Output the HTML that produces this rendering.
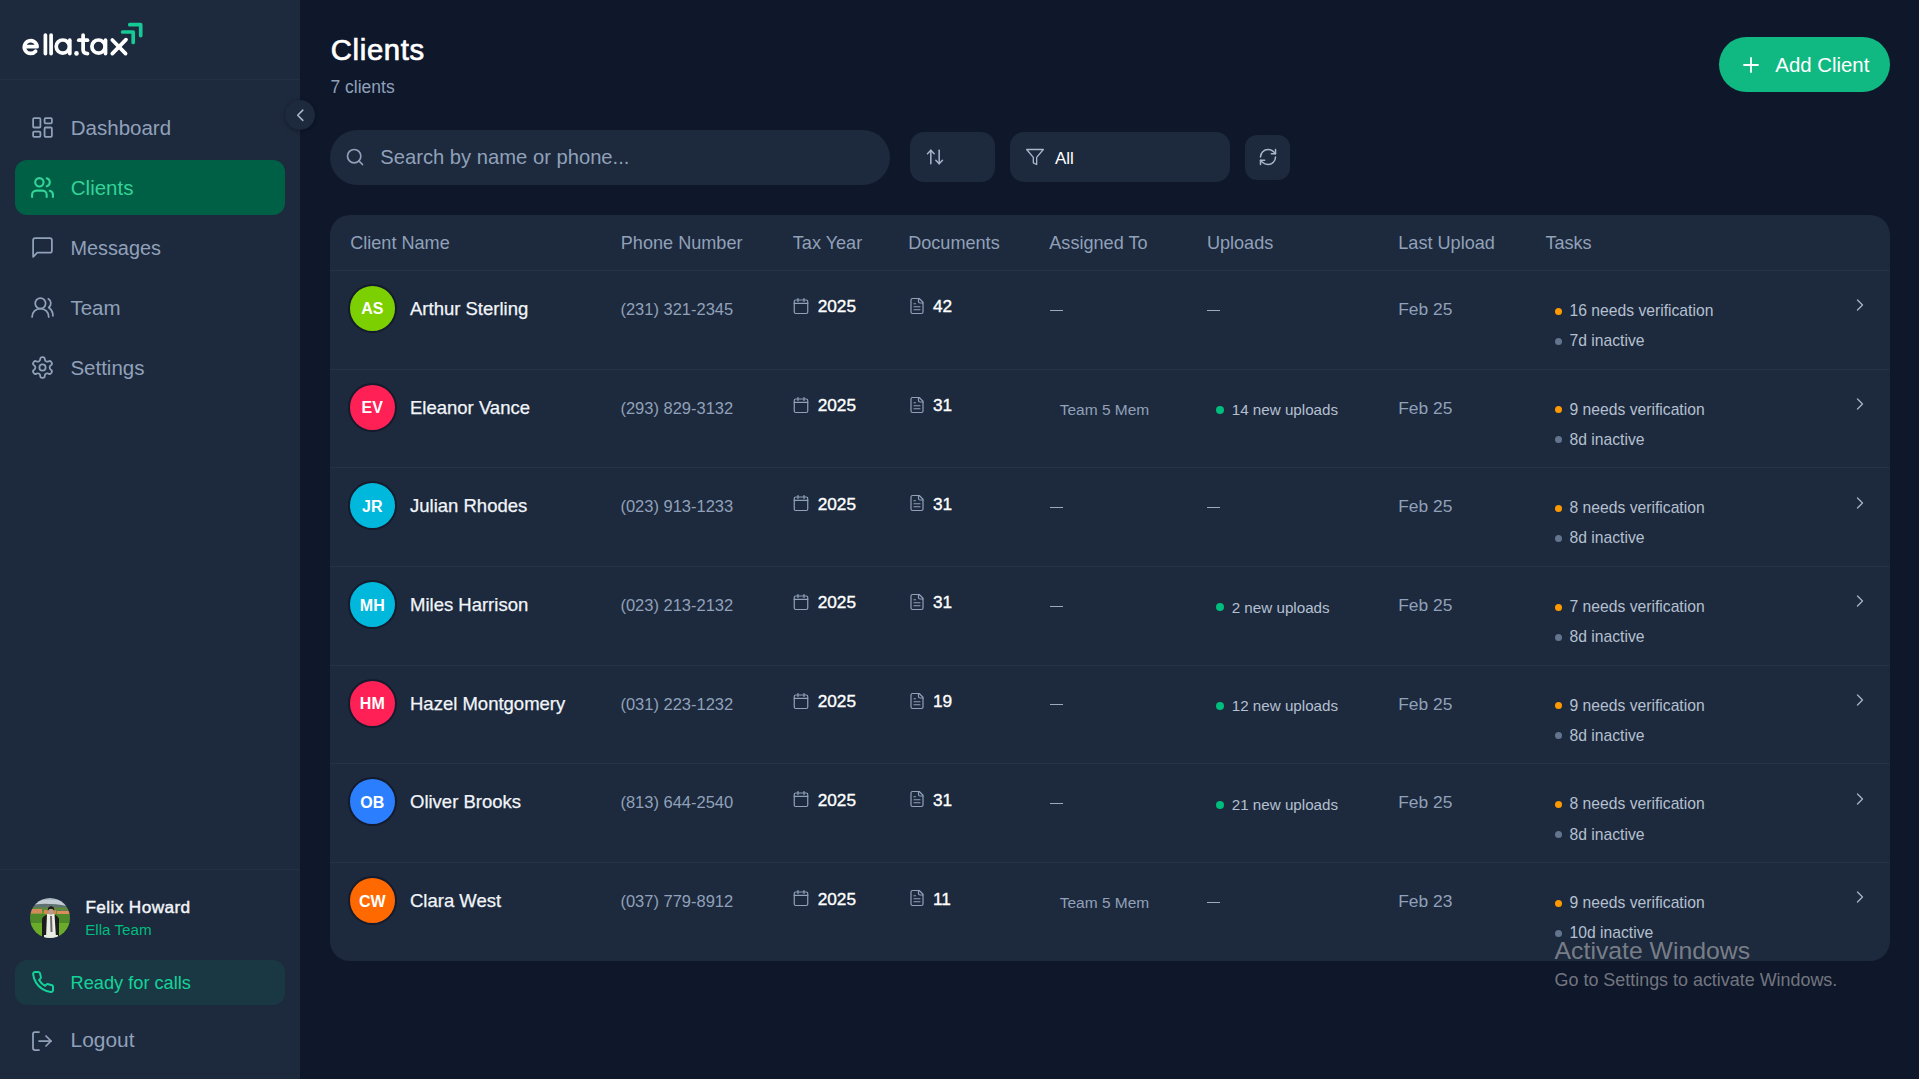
<!DOCTYPE html>
<html><head><meta charset="utf-8"><title>Clients</title>
<style>
html,body{margin:0;padding:0;}
body{width:1919px;height:1079px;overflow:hidden;background:#0f172b;position:relative;font-family:"Liberation Sans",sans-serif;}
.t{position:absolute;white-space:nowrap;line-height:1;}
.b{position:absolute;box-sizing:border-box;}
.i{position:absolute;overflow:visible;}
</style></head><body>
<div class="b" style="left:0px;top:0px;width:300px;height:1079px;background:#1d293d;border-radius:0px;"></div>
<div class="b" style="left:0px;top:79px;width:300px;height:1px;background:#243044;border-radius:0px;"></div>
<div class="b" style="left:0px;top:869px;width:300px;height:1px;background:#243044;border-radius:0px;"></div>
<svg class="i" style="left:0;top:0;width:160px;height:80px" viewBox="0 0 160 80" fill="none" stroke-linecap="round" stroke-linejoin="round">
<g stroke="#ffffff" stroke-width="3.7">
<path d="M24.6 46.7 H37.1 A6.4 6.4 0 1 0 35.6 51.2"/>
<path d="M45.4 35 V53.6"/><path d="M51.1 35 V53.6"/>
<circle cx="62.8" cy="46.6" r="6.6"/><path d="M69.8 40.2 V53.6"/>
<path d="M83.1 35 V50 Q83.1 53.6 87.5 53.6"/><path d="M78.8 40.2 H87.5"/>
<circle cx="98.5" cy="46.6" r="6.6"/><path d="M105.5 40.2 V53.6"/>
<path d="M112.3 40 L125.6 53.6"/><path d="M112.3 53.6 L126 39.6"/>
</g>
<circle cx="76.5" cy="53.4" r="2.3" fill="#fff"/>
<g stroke="#17c994" stroke-width="3.7" stroke-linecap="round">
<path d="M122.6 32 H133.2 V42.5"/><path d="M129.8 24.7 H140.7 V35.6"/>
</g>
</svg>
<div class="b" style="left:15px;top:160px;width:270px;height:55px;background:#006045;border-radius:12px;"></div>
<svg class="i" style="left:30.00px;top:115.00px;width:25px;height:25px" viewBox="0 0 24 24" fill="none" stroke="#90a1b9" stroke-width="1.7" stroke-linecap="round" stroke-linejoin="round"><rect width="7" height="9" x="3" y="3" rx="1"/><rect width="7" height="5" x="14" y="3" rx="1"/><rect width="7" height="9" x="14" y="12" rx="1"/><rect width="7" height="5" x="3" y="16" rx="1"/></svg>
<div class="t" style="left:70.80px;top:117.64px;font-size:20.50px;color:#90a1b9;">Dashboard</div>
<svg class="i" style="left:30.00px;top:174.80px;width:25px;height:25px" viewBox="0 0 24 24" fill="none" stroke="#34d399" stroke-width="2" stroke-linecap="round" stroke-linejoin="round"><path d="M16 21v-2a4 4 0 0 0-4-4H6a4 4 0 0 0-4 4v2"/><path d="M16 3.128a4 4 0 0 1 0 7.744"/><path d="M22 21v-2a4 4 0 0 0-3-3.87"/><circle cx="9" cy="7" r="4"/></svg>
<div class="t" style="left:70.80px;top:177.64px;font-size:20.50px;color:#34d399;">Clients</div>
<svg class="i" style="left:29.90px;top:234.90px;width:25px;height:25px" viewBox="0 0 24 24" fill="none" stroke="#90a1b9" stroke-width="1.7" stroke-linecap="round" stroke-linejoin="round"><path d="M21 15a2 2 0 0 1-2 2H7l-4 4V5a2 2 0 0 1 2-2h14a2 2 0 0 1 2 2z"/></svg>
<div class="t" style="left:70.40px;top:238.78px;font-size:19.87px;color:#90a1b9;">Messages</div>
<svg class="i" style="left:29.90px;top:294.90px;width:25px;height:25px" viewBox="0 0 24 24" fill="none" stroke="#90a1b9" stroke-width="1.7" stroke-linecap="round" stroke-linejoin="round"><path d="M18 21a8 8 0 0 0-16 0"/><circle cx="10" cy="8" r="5"/><path d="M22 20c0-3.37-2-6.5-4-8a5 5 0 0 0-.45-8.3"/></svg>
<div class="t" style="left:70.40px;top:297.64px;font-size:20.50px;color:#90a1b9;">Team</div>
<svg class="i" style="left:29.90px;top:355.10px;width:25px;height:25px" viewBox="0 0 24 24" fill="none" stroke="#90a1b9" stroke-width="1.7" stroke-linecap="round" stroke-linejoin="round"><path d="M12.22 2h-.44a2 2 0 0 0-2 2v.18a2 2 0 0 1-1 1.73l-.43.25a2 2 0 0 1-2 0l-.15-.08a2 2 0 0 0-2.73.73l-.22.38a2 2 0 0 0 .73 2.730l.15.1a2 2 0 0 1 1 1.72v.51a2 2 0 0 1-1 1.74l-.15.09a2 2 0 0 0-.73 2.73l.22.38a2 2 0 0 0 2.73.73l.15-.08a2 2 0 0 1 2 0l.43.25a2 2 0 0 1 1 1.73V20a2 2 0 0 0 2 2h.44a2 2 0 0 0 2-2v-.18a2 2 0 0 1 1-1.73l.43-.25a2 2 0 0 1 2 0l.15.08a2 2 0 0 0 2.73-.73l.22-.39a2 2 0 0 0-.73-2.73l-.15-.08a2 2 0 0 1-1-1.74v-.5a2 2 0 0 1 1-1.74l.15-.09a2 2 0 0 0 .73-2.73l-.22-.38a2 2 0 0 0-2.73-.73l-.15.08a2 2 0 0 1-2 0l-.43-.25a2 2 0 0 1-1-1.73V4a2 2 0 0 0-2-2z"/><circle cx="12" cy="12" r="3"/></svg>
<div class="t" style="left:70.40px;top:357.94px;font-size:20.50px;color:#90a1b9;">Settings</div>
<div class="b" style="left:285px;top:100px;width:30px;height:30px;border-radius:50%;background:#1d293d;box-shadow:0 1px 4px rgba(0,0,0,0.35)"></div>
<svg class="i" style="left:289.75px;top:104.75px;width:20.5px;height:20.5px" viewBox="0 0 24 24" fill="none" stroke="#a9b7cc" stroke-width="1.8" stroke-linecap="round" stroke-linejoin="round"><path d="m15 18-6-6 6-6"/></svg>
<svg class="i" style="left:30px;top:898px;width:40px;height:40px" viewBox="0 0 40 40">
<defs><clipPath id="cp"><circle cx="20" cy="20" r="20"/></clipPath><filter id="bl"><feGaussianBlur stdDeviation="0.5"/></filter></defs>
<g clip-path="url(#cp)"><g filter="url(#bl)">
<rect x="-2" y="-2" width="44" height="44" fill="#5f9a2c"/>
<rect x="-2" y="-2" width="44" height="10" fill="#a9b9c3"/>
<rect x="-2" y="2" width="44" height="5" fill="#c3ccd2"/>
<path d="M-2 8 Q10 5 20 6 Q32 6 42 10 L42 13 L-2 13 Z" fill="#5e716f"/>
<rect x="-2" y="9.5" width="44" height="3" fill="#5f8a38"/>
<rect x="-2" y="11" width="14" height="4.5" fill="#d4895a"/>
<rect x="14" y="12" width="12" height="4" fill="#cf8a55"/>
<rect x="27" y="13" width="15" height="3.5" fill="#d98d5a"/>
<rect x="-2" y="16" width="44" height="10" fill="#4f8a2a"/>
<rect x="-2" y="25" width="44" height="17" fill="#6aac2a"/>
<path d="M12 40 L12 21 Q13 17.5 18 16.5 L24 16.5 Q28 17.5 29 21 L29 40 Z" fill="#1c1e1a"/>
<path d="M17 16 L24.5 16 L26 40 L16 40 Z" fill="#eceee6"/>
<path d="M20 18 L22 18 L22.5 34 L20.5 34 Z" fill="#6a6a6a"/>
<ellipse cx="21" cy="13.5" rx="2.8" ry="3.2" fill="#b89a88"/>
<path d="M17.8 13 Q17.5 8.5 21 8.2 Q24.5 8.5 24.3 13 Q23 10.5 21 10.8 Q19 10.5 17.8 13Z" fill="#1a1614"/>
<rect x="14" y="37" width="14" height="4" fill="#e8efe0"/>
</g></g></svg>
<div class="t" style="left:85.40px;top:899.44px;font-size:17.20px;color:#f1f5f9;-webkit-text-stroke:0.45px #f1f5f9;letter-spacing:0.4px;">Felix Howard</div>
<div class="t" style="left:85.20px;top:922.23px;font-size:15.20px;color:#00bc7d;">Ella Team</div>
<div class="b" style="left:15px;top:960px;width:270px;height:45px;background:#1a3843;border-radius:12px;"></div>
<svg class="i" style="left:30.60px;top:970.40px;width:24px;height:24px" viewBox="0 0 24 24" fill="none" stroke="#14d39a" stroke-width="2" stroke-linecap="round" stroke-linejoin="round"><path d="M22 16.920v3a2 2 0 0 1-2.18 2 19.79 19.79 0 0 1-8.63-3.07 19.5 19.5 0 0 1-6-6 19.79 19.79 0 0 1-3.07-8.67A2 2 0 0 1 4.11 2h3a2 2 0 0 1 2 1.72 12.84 12.84 0 0 0 .7 2.81 2 2 0 0 1-.45 2.11L8.09 9.91a16 16 0 0 0 6 6l1.27-1.27a2 2 0 0 1 2.11-.45 12.84 12.84 0 0 0 2.81.7A2 2 0 0 1 22 16.92z"/></svg>
<div class="t" style="left:70.60px;top:974.19px;font-size:18.20px;color:#14d39a;">Ready for calls</div>
<svg class="i" style="left:30.40px;top:1028.70px;width:24px;height:24px" viewBox="0 0 24 24" fill="none" stroke="#90a1b9" stroke-width="1.75" stroke-linecap="round" stroke-linejoin="round"><path d="M9 21H5a2 2 0 0 1-2-2V5a2 2 0 0 1 2-2h4"/><polyline points="16 17 21 12 16 7"/><line x1="21" x2="9" y1="12" y2="12"/></svg>
<div class="t" style="left:70.60px;top:1029.80px;font-size:20.90px;color:#90a1b9;">Logout</div>
<div class="t" style="left:330.80px;top:34.79px;font-size:29.30px;color:#ffffff;-webkit-text-stroke:0.7px #fff;letter-spacing:0.65px;">Clients</div>
<div class="t" style="left:330.50px;top:79.38px;font-size:17.50px;color:#90a1b9;">7 clients</div>
<div class="b" style="left:1719px;top:37px;width:171px;height:55px;background:#10b981;border-radius:27.5px;"></div>
<svg class="i" style="left:1739.20px;top:52.60px;width:24px;height:24px" viewBox="0 0 24 24" fill="none" stroke="#ffffff" stroke-width="1.8" stroke-linecap="round" stroke-linejoin="round"><path d="M5 12h14"/><path d="M12 5v14"/></svg>
<div class="t" style="left:1775.30px;top:55.03px;font-size:20.40px;color:#ffffff;">Add Client</div>
<div class="b" style="left:330px;top:130px;width:560px;height:55px;background:#1d293d;border-radius:27.5px;"></div>
<svg class="i" style="left:345.00px;top:146.80px;width:20px;height:20px" viewBox="0 0 24 24" fill="none" stroke="#90a1b9" stroke-width="2" stroke-linecap="round" stroke-linejoin="round"><circle cx="11" cy="11" r="8"/><path d="m21 21-4.3-4.3"/></svg>
<div class="t" style="left:380.30px;top:146.60px;font-size:20.20px;color:#90a1b9;">Search by name or phone...</div>
<div class="b" style="left:910px;top:132px;width:85px;height:50px;background:#1d293d;border-radius:14px;"></div>
<svg class="i" style="left:924.80px;top:146.90px;width:20px;height:20px" viewBox="0 0 24 24" fill="none" stroke="#a9b7cc" stroke-width="1.8" stroke-linecap="round" stroke-linejoin="round"><path d="m21 16-4 4-4-4"/><path d="M17 20V4"/><path d="m3 8 4-4 4 4"/><path d="M7 4v16"/></svg>
<div class="b" style="left:1010px;top:132px;width:220px;height:50px;background:#1d293d;border-radius:14px;"></div>
<svg class="i" style="left:1025.00px;top:146.50px;width:20px;height:20px" viewBox="0 0 24 24" fill="none" stroke="#a9b7cc" stroke-width="1.6" stroke-linecap="round" stroke-linejoin="round"><polygon points="22 3 2 3 10 12.46 10 19 14 21 14 12.46 22 3"/></svg>
<div class="t" style="left:1055.00px;top:149.81px;font-size:17.00px;color:#ffffff;">All</div>
<div class="b" style="left:1245px;top:135px;width:45px;height:45px;background:#1d293d;border-radius:12px;"></div>
<svg class="i" style="left:1257.90px;top:147.00px;width:20px;height:20px" viewBox="0 0 24 24" fill="none" stroke="#a9b7cc" stroke-width="1.8" stroke-linecap="round" stroke-linejoin="round"><path d="M3 12a9 9 0 0 1 9-9 9.75 9.75 0 0 1 6.74 2.74L21 8"/><path d="M21 3v5h-5"/><path d="M21 12a9 9 0 0 1-9 9 9.75 9.75 0 0 1-6.74-2.74L3 16"/><path d="M8 16H3v5"/></svg>
<div class="b" style="left:330px;top:215px;width:1560px;height:746px;background:#1d293d;border-radius:20px;"></div>
<div class="t" style="left:350.20px;top:233.87px;font-size:18.10px;color:#90a1b9;">Client Name</div>
<div class="t" style="left:620.80px;top:233.87px;font-size:18.10px;color:#90a1b9;">Phone Number</div>
<div class="t" style="left:792.80px;top:233.87px;font-size:18.10px;color:#90a1b9;">Tax Year</div>
<div class="t" style="left:908.20px;top:233.87px;font-size:18.10px;color:#90a1b9;">Documents</div>
<div class="t" style="left:1049.30px;top:233.87px;font-size:18.10px;color:#90a1b9;">Assigned To</div>
<div class="t" style="left:1206.90px;top:233.87px;font-size:18.10px;color:#90a1b9;">Uploads</div>
<div class="t" style="left:1398.30px;top:233.87px;font-size:18.10px;color:#90a1b9;">Last Upload</div>
<div class="t" style="left:1545.40px;top:233.87px;font-size:18.10px;color:#90a1b9;">Tasks</div>
<div class="b" style="left:330px;top:270px;width:1560px;height:1px;background:#273245;border-radius:0px;"></div>
<div class="b" style="left:348px;top:284.00px;width:49px;height:49px;border-radius:50%;background:#7ccf00;border:2px solid #131b2d"></div>
<div class="t" style="left:361.18px;top:301.45px;font-size:16.00px;color:#ffffff;font-weight:700;">AS</div>
<div class="t" style="left:410.00px;top:299.94px;font-size:18.50px;color:#f1f5f9;-webkit-text-stroke:0.25px #f1f5f9;">Arthur Sterling</div>
<div class="t" style="left:620.40px;top:301.03px;font-size:16.50px;color:#90a1b9;">(231) 321-2345</div>
<svg class="i" style="left:791.60px;top:297.00px;width:18px;height:18px" viewBox="0 0 24 24" fill="none" stroke="#90a1b9" stroke-width="1.6" stroke-linecap="round" stroke-linejoin="round"><rect width="18" height="18" x="3" y="4" rx="2" ry="2"/><line x1="16" x2="16" y1="2" y2="6"/><line x1="8" x2="8" y1="2" y2="6"/><line x1="3" x2="21" y1="8.6" y2="8.6"/></svg>
<div class="t" style="left:817.70px;top:298.39px;font-size:17.25px;color:#ffffff;-webkit-text-stroke:0.35px #fff;">2025</div>
<svg class="i" style="left:907.60px;top:297.00px;width:18px;height:18px" viewBox="0 0 24 24" fill="none" stroke="#90a1b9" stroke-width="1.6" stroke-linecap="round" stroke-linejoin="round"><path d="M15 2H6a2 2 0 0 0-2 2v16a2 2 0 0 0 2 2h12a2 2 0 0 0 2-2V7Z"/><path d="M14 2v4a2 2 0 0 0 2 2h4"/><path d="M10 9H8"/><path d="M16 13H8"/><path d="M16 17H8"/></svg>
<div class="t" style="left:933.00px;top:298.39px;font-size:17.25px;color:#ffffff;-webkit-text-stroke:0.35px #fff;">42</div>
<div class="b" style="left:1050px;top:309.75px;width:13px;height:1.5px;background:#9aaac0;border-radius:0px;"></div>
<div class="b" style="left:1207px;top:309.75px;width:13px;height:1.5px;background:#9aaac0;border-radius:0px;"></div>
<div class="t" style="left:1398.20px;top:300.97px;font-size:17.40px;color:#90a1b9;">Feb 25</div>
<div class="b" style="left:1555px;top:307.50px;width:7px;height:7px;border-radius:50%;background:#fe9a00"></div>
<div class="t" style="left:1569.50px;top:303.01px;font-size:15.70px;color:#b4c0d0;">16 needs verification</div>
<div class="b" style="left:1555px;top:337.50px;width:7px;height:7px;border-radius:50%;background:#62748e"></div>
<div class="t" style="left:1569.50px;top:333.11px;font-size:15.70px;color:#b4c0d0;">7d inactive</div>
<svg class="i" style="left:1849.80px;top:295.20px;width:20px;height:20px" viewBox="0 0 24 24" fill="none" stroke="#a3b3c9" stroke-width="1.6" stroke-linecap="round" stroke-linejoin="round"><path d="m9 18 6-6-6-6"/></svg>
<div class="b" style="left:330px;top:368.69px;width:1560px;height:1px;background:#273245;border-radius:0px;"></div>
<div class="b" style="left:348px;top:382.69px;width:49px;height:49px;border-radius:50%;background:#ff2056;border:2px solid #131b2d"></div>
<div class="t" style="left:361.62px;top:400.14px;font-size:16.00px;color:#ffffff;font-weight:700;">EV</div>
<div class="t" style="left:410.00px;top:398.63px;font-size:18.50px;color:#f1f5f9;-webkit-text-stroke:0.25px #f1f5f9;">Eleanor Vance</div>
<div class="t" style="left:620.40px;top:399.72px;font-size:16.50px;color:#90a1b9;">(293) 829-3132</div>
<svg class="i" style="left:791.60px;top:395.69px;width:18px;height:18px" viewBox="0 0 24 24" fill="none" stroke="#90a1b9" stroke-width="1.6" stroke-linecap="round" stroke-linejoin="round"><rect width="18" height="18" x="3" y="4" rx="2" ry="2"/><line x1="16" x2="16" y1="2" y2="6"/><line x1="8" x2="8" y1="2" y2="6"/><line x1="3" x2="21" y1="8.6" y2="8.6"/></svg>
<div class="t" style="left:817.70px;top:397.08px;font-size:17.25px;color:#ffffff;-webkit-text-stroke:0.35px #fff;">2025</div>
<svg class="i" style="left:907.60px;top:395.69px;width:18px;height:18px" viewBox="0 0 24 24" fill="none" stroke="#90a1b9" stroke-width="1.6" stroke-linecap="round" stroke-linejoin="round"><path d="M15 2H6a2 2 0 0 0-2 2v16a2 2 0 0 0 2 2h12a2 2 0 0 0 2-2V7Z"/><path d="M14 2v4a2 2 0 0 0 2 2h4"/><path d="M10 9H8"/><path d="M16 13H8"/><path d="M16 17H8"/></svg>
<div class="t" style="left:933.00px;top:397.08px;font-size:17.25px;color:#ffffff;-webkit-text-stroke:0.35px #fff;">31</div>
<div class="t" style="left:1059.70px;top:401.57px;font-size:15.50px;color:#90a1b9;">Team 5 Mem</div>
<div class="b" style="left:1216px;top:406.09px;width:8px;height:8px;border-radius:50%;background:#00bc7d"></div>
<div class="t" style="left:1231.70px;top:402.22px;font-size:15.20px;color:#b4c0d0;">14 new uploads</div>
<div class="t" style="left:1398.20px;top:399.66px;font-size:17.40px;color:#90a1b9;">Feb 25</div>
<div class="b" style="left:1555px;top:406.19px;width:7px;height:7px;border-radius:50%;background:#fe9a00"></div>
<div class="t" style="left:1569.50px;top:401.70px;font-size:15.70px;color:#b4c0d0;">9 needs verification</div>
<div class="b" style="left:1555px;top:436.19px;width:7px;height:7px;border-radius:50%;background:#62748e"></div>
<div class="t" style="left:1569.50px;top:431.80px;font-size:15.70px;color:#b4c0d0;">8d inactive</div>
<svg class="i" style="left:1849.80px;top:393.89px;width:20px;height:20px" viewBox="0 0 24 24" fill="none" stroke="#a3b3c9" stroke-width="1.6" stroke-linecap="round" stroke-linejoin="round"><path d="m9 18 6-6-6-6"/></svg>
<div class="b" style="left:330px;top:467.38px;width:1560px;height:1px;background:#273245;border-radius:0px;"></div>
<div class="b" style="left:348px;top:481.38px;width:49px;height:49px;border-radius:50%;background:#00b8db;border:2px solid #131b2d"></div>
<div class="t" style="left:362.06px;top:498.83px;font-size:16.00px;color:#ffffff;font-weight:700;">JR</div>
<div class="t" style="left:410.00px;top:497.32px;font-size:18.50px;color:#f1f5f9;-webkit-text-stroke:0.25px #f1f5f9;">Julian Rhodes</div>
<div class="t" style="left:620.40px;top:498.41px;font-size:16.50px;color:#90a1b9;">(023) 913-1233</div>
<svg class="i" style="left:791.60px;top:494.38px;width:18px;height:18px" viewBox="0 0 24 24" fill="none" stroke="#90a1b9" stroke-width="1.6" stroke-linecap="round" stroke-linejoin="round"><rect width="18" height="18" x="3" y="4" rx="2" ry="2"/><line x1="16" x2="16" y1="2" y2="6"/><line x1="8" x2="8" y1="2" y2="6"/><line x1="3" x2="21" y1="8.6" y2="8.6"/></svg>
<div class="t" style="left:817.70px;top:495.77px;font-size:17.25px;color:#ffffff;-webkit-text-stroke:0.35px #fff;">2025</div>
<svg class="i" style="left:907.60px;top:494.38px;width:18px;height:18px" viewBox="0 0 24 24" fill="none" stroke="#90a1b9" stroke-width="1.6" stroke-linecap="round" stroke-linejoin="round"><path d="M15 2H6a2 2 0 0 0-2 2v16a2 2 0 0 0 2 2h12a2 2 0 0 0 2-2V7Z"/><path d="M14 2v4a2 2 0 0 0 2 2h4"/><path d="M10 9H8"/><path d="M16 13H8"/><path d="M16 17H8"/></svg>
<div class="t" style="left:933.00px;top:495.77px;font-size:17.25px;color:#ffffff;-webkit-text-stroke:0.35px #fff;">31</div>
<div class="b" style="left:1050px;top:506.75px;width:13px;height:1.5px;background:#9aaac0;border-radius:0px;"></div>
<div class="b" style="left:1207px;top:506.75px;width:13px;height:1.5px;background:#9aaac0;border-radius:0px;"></div>
<div class="t" style="left:1398.20px;top:498.35px;font-size:17.40px;color:#90a1b9;">Feb 25</div>
<div class="b" style="left:1555px;top:504.88px;width:7px;height:7px;border-radius:50%;background:#fe9a00"></div>
<div class="t" style="left:1569.50px;top:500.39px;font-size:15.70px;color:#b4c0d0;">8 needs verification</div>
<div class="b" style="left:1555px;top:534.88px;width:7px;height:7px;border-radius:50%;background:#62748e"></div>
<div class="t" style="left:1569.50px;top:530.49px;font-size:15.70px;color:#b4c0d0;">8d inactive</div>
<svg class="i" style="left:1849.80px;top:492.58px;width:20px;height:20px" viewBox="0 0 24 24" fill="none" stroke="#a3b3c9" stroke-width="1.6" stroke-linecap="round" stroke-linejoin="round"><path d="m9 18 6-6-6-6"/></svg>
<div class="b" style="left:330px;top:566.07px;width:1560px;height:1px;background:#273245;border-radius:0px;"></div>
<div class="b" style="left:348px;top:580.07px;width:49px;height:49px;border-radius:50%;background:#00b8db;border:2px solid #131b2d"></div>
<div class="t" style="left:359.86px;top:597.52px;font-size:16.00px;color:#ffffff;font-weight:700;">MH</div>
<div class="t" style="left:410.00px;top:596.01px;font-size:18.50px;color:#f1f5f9;-webkit-text-stroke:0.25px #f1f5f9;">Miles Harrison</div>
<div class="t" style="left:620.40px;top:597.10px;font-size:16.50px;color:#90a1b9;">(023) 213-2132</div>
<svg class="i" style="left:791.60px;top:593.07px;width:18px;height:18px" viewBox="0 0 24 24" fill="none" stroke="#90a1b9" stroke-width="1.6" stroke-linecap="round" stroke-linejoin="round"><rect width="18" height="18" x="3" y="4" rx="2" ry="2"/><line x1="16" x2="16" y1="2" y2="6"/><line x1="8" x2="8" y1="2" y2="6"/><line x1="3" x2="21" y1="8.6" y2="8.6"/></svg>
<div class="t" style="left:817.70px;top:594.46px;font-size:17.25px;color:#ffffff;-webkit-text-stroke:0.35px #fff;">2025</div>
<svg class="i" style="left:907.60px;top:593.07px;width:18px;height:18px" viewBox="0 0 24 24" fill="none" stroke="#90a1b9" stroke-width="1.6" stroke-linecap="round" stroke-linejoin="round"><path d="M15 2H6a2 2 0 0 0-2 2v16a2 2 0 0 0 2 2h12a2 2 0 0 0 2-2V7Z"/><path d="M14 2v4a2 2 0 0 0 2 2h4"/><path d="M10 9H8"/><path d="M16 13H8"/><path d="M16 17H8"/></svg>
<div class="t" style="left:933.00px;top:594.46px;font-size:17.25px;color:#ffffff;-webkit-text-stroke:0.35px #fff;">31</div>
<div class="b" style="left:1050px;top:605.75px;width:13px;height:1.5px;background:#9aaac0;border-radius:0px;"></div>
<div class="b" style="left:1216px;top:603.47px;width:8px;height:8px;border-radius:50%;background:#00bc7d"></div>
<div class="t" style="left:1231.70px;top:599.60px;font-size:15.20px;color:#b4c0d0;">2 new uploads</div>
<div class="t" style="left:1398.20px;top:597.04px;font-size:17.40px;color:#90a1b9;">Feb 25</div>
<div class="b" style="left:1555px;top:603.57px;width:7px;height:7px;border-radius:50%;background:#fe9a00"></div>
<div class="t" style="left:1569.50px;top:599.08px;font-size:15.70px;color:#b4c0d0;">7 needs verification</div>
<div class="b" style="left:1555px;top:633.57px;width:7px;height:7px;border-radius:50%;background:#62748e"></div>
<div class="t" style="left:1569.50px;top:629.18px;font-size:15.70px;color:#b4c0d0;">8d inactive</div>
<svg class="i" style="left:1849.80px;top:591.27px;width:20px;height:20px" viewBox="0 0 24 24" fill="none" stroke="#a3b3c9" stroke-width="1.6" stroke-linecap="round" stroke-linejoin="round"><path d="m9 18 6-6-6-6"/></svg>
<div class="b" style="left:330px;top:664.76px;width:1560px;height:1px;background:#273245;border-radius:0px;"></div>
<div class="b" style="left:348px;top:678.76px;width:49px;height:49px;border-radius:50%;background:#ff2056;border:2px solid #131b2d"></div>
<div class="t" style="left:359.86px;top:696.21px;font-size:16.00px;color:#ffffff;font-weight:700;">HM</div>
<div class="t" style="left:410.00px;top:694.70px;font-size:18.50px;color:#f1f5f9;-webkit-text-stroke:0.25px #f1f5f9;">Hazel Montgomery</div>
<div class="t" style="left:620.40px;top:695.79px;font-size:16.50px;color:#90a1b9;">(031) 223-1232</div>
<svg class="i" style="left:791.60px;top:691.76px;width:18px;height:18px" viewBox="0 0 24 24" fill="none" stroke="#90a1b9" stroke-width="1.6" stroke-linecap="round" stroke-linejoin="round"><rect width="18" height="18" x="3" y="4" rx="2" ry="2"/><line x1="16" x2="16" y1="2" y2="6"/><line x1="8" x2="8" y1="2" y2="6"/><line x1="3" x2="21" y1="8.6" y2="8.6"/></svg>
<div class="t" style="left:817.70px;top:693.15px;font-size:17.25px;color:#ffffff;-webkit-text-stroke:0.35px #fff;">2025</div>
<svg class="i" style="left:907.60px;top:691.76px;width:18px;height:18px" viewBox="0 0 24 24" fill="none" stroke="#90a1b9" stroke-width="1.6" stroke-linecap="round" stroke-linejoin="round"><path d="M15 2H6a2 2 0 0 0-2 2v16a2 2 0 0 0 2 2h12a2 2 0 0 0 2-2V7Z"/><path d="M14 2v4a2 2 0 0 0 2 2h4"/><path d="M10 9H8"/><path d="M16 13H8"/><path d="M16 17H8"/></svg>
<div class="t" style="left:933.00px;top:693.15px;font-size:17.25px;color:#ffffff;-webkit-text-stroke:0.35px #fff;">19</div>
<div class="b" style="left:1050px;top:703.75px;width:13px;height:1.5px;background:#9aaac0;border-radius:0px;"></div>
<div class="b" style="left:1216px;top:702.16px;width:8px;height:8px;border-radius:50%;background:#00bc7d"></div>
<div class="t" style="left:1231.70px;top:698.29px;font-size:15.20px;color:#b4c0d0;">12 new uploads</div>
<div class="t" style="left:1398.20px;top:695.73px;font-size:17.40px;color:#90a1b9;">Feb 25</div>
<div class="b" style="left:1555px;top:702.26px;width:7px;height:7px;border-radius:50%;background:#fe9a00"></div>
<div class="t" style="left:1569.50px;top:697.77px;font-size:15.70px;color:#b4c0d0;">9 needs verification</div>
<div class="b" style="left:1555px;top:732.26px;width:7px;height:7px;border-radius:50%;background:#62748e"></div>
<div class="t" style="left:1569.50px;top:727.87px;font-size:15.70px;color:#b4c0d0;">8d inactive</div>
<svg class="i" style="left:1849.80px;top:689.96px;width:20px;height:20px" viewBox="0 0 24 24" fill="none" stroke="#a3b3c9" stroke-width="1.6" stroke-linecap="round" stroke-linejoin="round"><path d="m9 18 6-6-6-6"/></svg>
<div class="b" style="left:330px;top:763.45px;width:1560px;height:1px;background:#273245;border-radius:0px;"></div>
<div class="b" style="left:348px;top:777.45px;width:49px;height:49px;border-radius:50%;background:#2b7fff;border:2px solid #131b2d"></div>
<div class="t" style="left:360.30px;top:794.90px;font-size:16.00px;color:#ffffff;font-weight:700;">OB</div>
<div class="t" style="left:410.00px;top:793.39px;font-size:18.50px;color:#f1f5f9;-webkit-text-stroke:0.25px #f1f5f9;">Oliver Brooks</div>
<div class="t" style="left:620.40px;top:794.48px;font-size:16.50px;color:#90a1b9;">(813) 644-2540</div>
<svg class="i" style="left:791.60px;top:790.45px;width:18px;height:18px" viewBox="0 0 24 24" fill="none" stroke="#90a1b9" stroke-width="1.6" stroke-linecap="round" stroke-linejoin="round"><rect width="18" height="18" x="3" y="4" rx="2" ry="2"/><line x1="16" x2="16" y1="2" y2="6"/><line x1="8" x2="8" y1="2" y2="6"/><line x1="3" x2="21" y1="8.6" y2="8.6"/></svg>
<div class="t" style="left:817.70px;top:791.84px;font-size:17.25px;color:#ffffff;-webkit-text-stroke:0.35px #fff;">2025</div>
<svg class="i" style="left:907.60px;top:790.45px;width:18px;height:18px" viewBox="0 0 24 24" fill="none" stroke="#90a1b9" stroke-width="1.6" stroke-linecap="round" stroke-linejoin="round"><path d="M15 2H6a2 2 0 0 0-2 2v16a2 2 0 0 0 2 2h12a2 2 0 0 0 2-2V7Z"/><path d="M14 2v4a2 2 0 0 0 2 2h4"/><path d="M10 9H8"/><path d="M16 13H8"/><path d="M16 17H8"/></svg>
<div class="t" style="left:933.00px;top:791.84px;font-size:17.25px;color:#ffffff;-webkit-text-stroke:0.35px #fff;">31</div>
<div class="b" style="left:1050px;top:802.75px;width:13px;height:1.5px;background:#9aaac0;border-radius:0px;"></div>
<div class="b" style="left:1216px;top:800.85px;width:8px;height:8px;border-radius:50%;background:#00bc7d"></div>
<div class="t" style="left:1231.70px;top:796.98px;font-size:15.20px;color:#b4c0d0;">21 new uploads</div>
<div class="t" style="left:1398.20px;top:794.42px;font-size:17.40px;color:#90a1b9;">Feb 25</div>
<div class="b" style="left:1555px;top:800.95px;width:7px;height:7px;border-radius:50%;background:#fe9a00"></div>
<div class="t" style="left:1569.50px;top:796.46px;font-size:15.70px;color:#b4c0d0;">8 needs verification</div>
<div class="b" style="left:1555px;top:830.95px;width:7px;height:7px;border-radius:50%;background:#62748e"></div>
<div class="t" style="left:1569.50px;top:826.56px;font-size:15.70px;color:#b4c0d0;">8d inactive</div>
<svg class="i" style="left:1849.80px;top:788.65px;width:20px;height:20px" viewBox="0 0 24 24" fill="none" stroke="#a3b3c9" stroke-width="1.6" stroke-linecap="round" stroke-linejoin="round"><path d="m9 18 6-6-6-6"/></svg>
<div class="b" style="left:330px;top:862.14px;width:1560px;height:1px;background:#273245;border-radius:0px;"></div>
<div class="b" style="left:348px;top:876.14px;width:49px;height:49px;border-radius:50%;background:#ff6900;border:2px solid #131b2d"></div>
<div class="t" style="left:358.98px;top:893.59px;font-size:16.00px;color:#ffffff;font-weight:700;">CW</div>
<div class="t" style="left:410.00px;top:892.08px;font-size:18.50px;color:#f1f5f9;-webkit-text-stroke:0.25px #f1f5f9;">Clara West</div>
<div class="t" style="left:620.40px;top:893.17px;font-size:16.50px;color:#90a1b9;">(037) 779-8912</div>
<svg class="i" style="left:791.60px;top:889.14px;width:18px;height:18px" viewBox="0 0 24 24" fill="none" stroke="#90a1b9" stroke-width="1.6" stroke-linecap="round" stroke-linejoin="round"><rect width="18" height="18" x="3" y="4" rx="2" ry="2"/><line x1="16" x2="16" y1="2" y2="6"/><line x1="8" x2="8" y1="2" y2="6"/><line x1="3" x2="21" y1="8.6" y2="8.6"/></svg>
<div class="t" style="left:817.70px;top:890.53px;font-size:17.25px;color:#ffffff;-webkit-text-stroke:0.35px #fff;">2025</div>
<svg class="i" style="left:907.60px;top:889.14px;width:18px;height:18px" viewBox="0 0 24 24" fill="none" stroke="#90a1b9" stroke-width="1.6" stroke-linecap="round" stroke-linejoin="round"><path d="M15 2H6a2 2 0 0 0-2 2v16a2 2 0 0 0 2 2h12a2 2 0 0 0 2-2V7Z"/><path d="M14 2v4a2 2 0 0 0 2 2h4"/><path d="M10 9H8"/><path d="M16 13H8"/><path d="M16 17H8"/></svg>
<div class="t" style="left:933.00px;top:890.53px;font-size:17.25px;color:#ffffff;-webkit-text-stroke:0.35px #fff;">11</div>
<div class="t" style="left:1059.70px;top:895.02px;font-size:15.50px;color:#90a1b9;">Team 5 Mem</div>
<div class="b" style="left:1207px;top:901.75px;width:13px;height:1.5px;background:#9aaac0;border-radius:0px;"></div>
<div class="t" style="left:1398.20px;top:893.11px;font-size:17.40px;color:#90a1b9;">Feb 23</div>
<div class="b" style="left:1555px;top:899.64px;width:7px;height:7px;border-radius:50%;background:#fe9a00"></div>
<div class="t" style="left:1569.50px;top:895.15px;font-size:15.70px;color:#b4c0d0;">9 needs verification</div>
<div class="b" style="left:1555px;top:929.64px;width:7px;height:7px;border-radius:50%;background:#62748e"></div>
<div class="t" style="left:1569.50px;top:925.25px;font-size:15.70px;color:#b4c0d0;">10d inactive</div>
<svg class="i" style="left:1849.80px;top:887.34px;width:20px;height:20px" viewBox="0 0 24 24" fill="none" stroke="#a3b3c9" stroke-width="1.6" stroke-linecap="round" stroke-linejoin="round"><path d="m9 18 6-6-6-6"/></svg>
<div class="t" style="left:1554.60px;top:938.73px;font-size:24.77px;color:rgba(200,200,200,0.55);">Activate Windows</div>
<div class="t" style="left:1554.60px;top:971.83px;font-size:17.92px;color:rgba(200,200,200,0.55);">Go to Settings to activate Windows.</div>
</body></html>
